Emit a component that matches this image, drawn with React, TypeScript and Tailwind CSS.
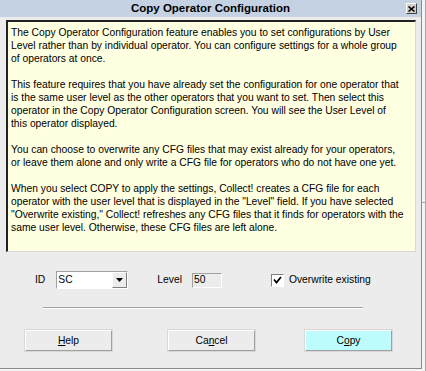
import React from "react";

const lines = [
  "The Copy Operator Configuration feature enables you to set configurations by User",
  "Level rather than by individual operator. You can configure settings for a whole group",
  "of operators at once.",
  "",
  "This feature requires that you have already set the configuration for one operator that",
  "is the same user level as the other operators that you want to set. Then select this",
  "operator in the Copy Operator Configuration screen. You will see the User Level of",
  "this operator displayed.",
  "",
  "You can choose to overwrite any CFG files that may exist already for your operators,",
  "or leave them alone and only write a CFG file for operators who do not have one yet.",
  "",
  "When you select COPY to apply the settings, Collect! creates a CFG file for each",
  'operator with the user level that is displayed in the "Level" field. If you have selected',
  '"Overwrite existing," Collect! refreshes any CFG files that it finds for operators with the',
  "same user level. Otherwise, these CFG files are left alone.",
];

function DlgButton({ label, hot, bg = "bg-[#ececec]" }: { label: string; hot: number; bg?: string }) {
  return (
    <button
      className={`flex h-[21px] w-[87px] items-center justify-center border border-t-white border-l-white border-r-[#a0a0a0] border-b-[#a0a0a0] outline outline-1 outline-[#d8d8d8] ${bg} text-black`}
    >
      {label.slice(0, hot)}
      <span className="underline underline-offset-1">{label[hot]}</span>
      {label.slice(hot + 1)}
    </button>
  );
}

export default function App() {
  return (
    <div
      className="flex h-[371px] w-[426px] overflow-hidden bg-[#f4f4f4] text-[10.3px] text-black"
      style={{ fontFamily: '"Liberation Sans", Arial, sans-serif' }}
    >
      <div className="flex h-[369px] w-[422px] flex-col border-r border-b border-[#8c8c8c] bg-[#ececec]">
        <div className="relative flex h-[17px] items-center justify-center bg-[#c4d2e4]">
          <span className="text-[11.5px] font-bold leading-none">Copy Operator Configuration</span>
          <div className="absolute right-[4px] top-[3px] flex h-[11px] w-[11px] items-center justify-center border border-t-white border-l-white border-r-[#404040] border-b-[#404040] bg-[#d4d0c8]">
            <svg width="7" height="6" viewBox="0 0 7 6">
              <path d="M0.5 0.5 L6.5 5.5 M6.5 0.5 L0.5 5.5" stroke="#000" strokeWidth="1.6" />
            </svg>
          </div>
        </div>

        <div className="ml-[6px] mt-[3px] h-[232px] w-[410px] overflow-hidden border-t-2 border-l-2 border-t-[#222] border-l-[#222] border-r border-b border-r-[#d8d8d8] border-b-[#d8d8d8] bg-[#ffffe1] pl-[3px] pt-[4px]">
          {lines.map((l, i) => (
            <div key={i} className="h-[13px] whitespace-nowrap leading-[13px]">
              {l}
            </div>
          ))}
        </div>

        <div className="mt-[19px] flex h-[18px] items-center pl-[35px]">
          <span>ID</span>
          <div className="ml-[11px] flex h-[18px] w-[72px] border border-t-[#a0a0a0] border-l-[#a0a0a0] border-r-white border-b-white bg-white">
            <div className="flex flex-1 items-center pl-[1px]">SC</div>
            <div className="flex w-[15px] items-center justify-center border border-t-white border-l-white border-r-[#808080] border-b-[#808080] bg-[#ececec]">
              <svg width="7" height="4" viewBox="0 0 7 4">
                <path d="M0 0 H7 L3.5 4 Z" fill="#000" />
              </svg>
            </div>
          </div>
          <span className="ml-[29px]">Level</span>
          <div className="ml-[10px] flex h-[15px] w-[30px] items-center border border-t-[#a0a0a0] border-l-[#a0a0a0] border-r-white border-b-white bg-[#ececec] pl-[1px]">
            50
          </div>
          <div className="ml-[49px] flex h-[13px] w-[13px] items-center justify-center border border-t-[#808080] border-l-[#808080] border-r-white border-b-white bg-white">
            <svg width="9" height="8" viewBox="0 0 9 8">
              <path d="M1 3.5 L3.5 6.5 L8 1" stroke="#000" strokeWidth="1.8" fill="none" />
            </svg>
          </div>
          <span className="ml-[5px]">Overwrite existing</span>
        </div>

        <div className="ml-[43px] mt-[18px] h-[2px] w-[320px] border-t border-b border-t-[#a0a0a0] border-b-white" />

        <div className="mt-[21px] flex items-center pl-[25px]">
          <DlgButton label="Help" hot={0} />
          <div className="ml-[56px]">
            <DlgButton label="Cancel" hot={2} />
          </div>
          <div className="ml-[50px]">
            <DlgButton label="Copy" hot={1} bg="bg-[#bdfbfd]" />
          </div>
        </div>
      </div>
      <div className="flex flex-1 flex-col">
        <div className="h-[202px] border-r border-[#a8a8a8]" />
        <div className="h-px bg-[#a8a8a8]" />
        <div className="flex-1 border-r border-[#a8a8a8]" />
      </div>
    </div>
  );
}
